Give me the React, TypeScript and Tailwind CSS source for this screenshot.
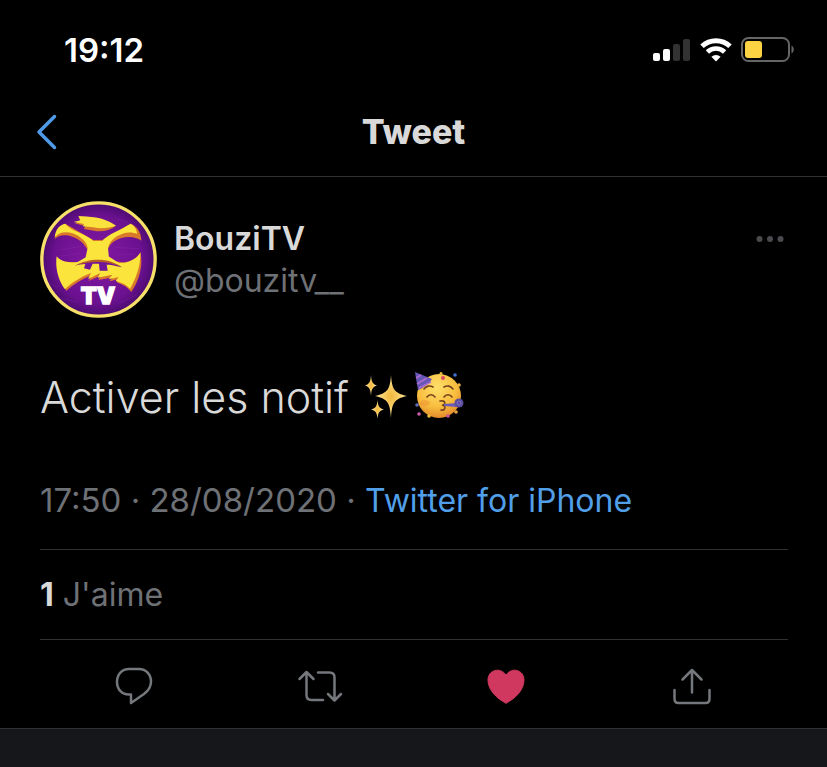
import type { ReactNode } from "react";

function SignalIcon() {
  return (
    <svg viewBox="0 0 38 24" className="h-6 w-[38px]" aria-hidden="true">
      <rect x="0" y="15" width="7" height="8" rx="2" fill="#fff" />
      <rect x="10" y="11" width="7" height="12" rx="2" fill="#fff" />
      <rect x="20" y="6" width="7" height="17" rx="2" fill="#323232" />
      <rect x="30" y="1" width="7" height="22" rx="2" fill="#323232" />
    </svg>
  );
}

function WifiIcon() {
  return (
    <svg viewBox="0 0 32 24" className="h-6 w-8" fill="none" stroke="#fff" aria-hidden="true">
      <path d="M2 8.200A20.400 20.400 0 0 1 30 8.200" strokeWidth="5" />
      <path d="M7.400 14A12.400 12.400 0 0 1 24.600 14" strokeWidth="4.600" />
      <path d="M16 23.400L11.400 18.800A6.600 6.600 0 0 1 20.600 18.800Z" fill="#fff" stroke="none" />
    </svg>
  );
}

function BatteryIcon() {
  return (
    <svg viewBox="0 0 54 26" className="h-[26px] w-[54px]" aria-hidden="true">
      <rect x="1" y="1" width="47" height="23" rx="6.500" fill="none" stroke="#656565" strokeWidth="2" />
      <rect x="4" y="4" width="17" height="17" rx="3" fill="#fbd343" />
      <path d="M50.500 8.500c3 1.500 3 6.500 0 8z" fill="#656565" />
    </svg>
  );
}

function Avatar() {
  return (
    <svg viewBox="30 33 351 351" className="size-[117px] shrink-0" role="img" aria-label="BouziTV">
      <defs>
        <radialGradient id="avatar-bg" gradientUnits="userSpaceOnUse" cx="205" cy="208" r="175">
          <stop offset="0" stopColor="#8419a3" />
          <stop offset="0.75" stopColor="#6b1190" />
          <stop offset="1" stopColor="#470a6c" />
        </radialGradient>
      </defs>
      <circle cx="205.500" cy="208.500" r="170" fill="url(#avatar-bg)" stroke="#f7e06a" strokeWidth="10" />
      {/* orange edge under the face */}
      <g fill="#d9782b">
        <path d="M134 100L154 97L148 84C179 87 221 84 258 107C240 121 214 127 192 122L162 117L165 108Z" />
        <path d="M74 148C80 140 92 134 112 136C136 141 154 152 166 170L180 185L232 185C236 165 250 152 272 145C294 138 316 140 334 152C334 126 320 108 302 101L217 150L190 150L106 101L80 122Z" />
        <path d="M331 187C340 224 329 270 304 306C294 293 280 284 260 277L268 267L238 274L249 262L205 270L213 256L176 273L185 256C156 267 130 284 108 303L80 199L200 240Z" />
      </g>
      <path d="M131 96L151 91L145 78C176 81 218 78 258 107C238 114 214 117 190 112L159 109L162 102Z" fill="#fbe13d" />
      <g fill="#fbe43c">
        <path d="M74 142C76 119 88 104 106 101C116 115 136 122 158 133C172 140 184 147 190 153H217C224 144 238 135 254 127C273 117 291 108 302 101C312 106 320 117 322 132C308 126 292 126 278 131C252 140 238 155 234 175L240 235H160L173 173C169 154 151 139 128 130C106 123 85 127 74 142Z" />
        <path d="M80 199C91 213 117 221 143 216L205 180L266 218C292 221 319 207 331 187C332 224 320 263 300 296C290 285 276 278 257 273L266 261L236 268L247 254L203 263L211 249L174 267L183 249C154 260 126 277 105 298C84 270 75 232 80 199Z" />
      </g>
      {/* eye sockets, open on the outer side */}
      <path d="M74 152C88 136 115 138 137 146C158 156 168 168 167 182C166 200 151 212 129 216C108 218 90 211 80 199L72 190Z" fill="url(#avatar-bg)" />
      <path d="M331 187L340 170L334 153C314 140 288 140 268 149C250 157 241 170 241 185C242 203 255 214 275 217C298 218 321 205 331 187Z" fill="url(#avatar-bg)" />
      {/* mouth and teeth */}
      <path d="M134 227C157 216 180 212 205 212C231 212 254 218 276 232C254 226 239 224 230 224L233 242H209L207 221H188L180 239L162 235L166 222C154 223 145 224 134 227Z" fill="#70149a" />
      <path d="M134 227C157 214 180 209 205 209C231 209 254 216 276 232C253 221 229 216 205 216C180 216 156 220 134 227Z" fill="#b85d27" />
      <g stroke="#a846c4" strokeWidth="2" opacity="0.25">
        <path d="M90 180L155 168M95 198L150 190M60 280L82 292M255 172L325 176M265 195L315 192M262 86L310 105M85 322L145 338M265 340L320 315" />
      </g>
      <text x="204" y="341" textAnchor="middle" fill="#fff" stroke="#fff" strokeWidth="4" className="text-[70px] font-black">
        TV
      </text>
    </svg>
  );
}

function Sparkles() {
  return (
    <svg viewBox="0 0 46 48" className="h-12 w-[46px]" role="img" aria-label="étincelles">
      <defs>
        <radialGradient id="sparkle">
          <stop offset="0" stopColor="#f2b73b" />
          <stop offset="1" stopColor="#ffe99c" />
        </radialGradient>
      </defs>
      <g fill="url(#sparkle)">
        <path d="M26 2C27 16 29 20 42 23C29 26 27 30 26 45C25 30 23 26 10 23C23 20 25 16 26 2Z" />
        <path d="M6 2C6.500 9 7.500 11 12 12.500C7.500 14 6.500 16 6 23C5.500 16 4.500 14 0 12.500C4.500 11 5.500 9 6 2Z" />
        <path d="M12.500 27C13 33 14 35 19 36.500C14 38 13 40 12.500 46C12 40 11 38 6 36.500C11 35 12 33 12.500 27Z" />
      </g>
    </svg>
  );
}

function PartyFace() {
  return (
    <svg viewBox="0 0 50 50" className="size-[50px]" role="img" aria-label="visage de fête">
      <defs>
        <radialGradient id="face" cx="0.45" cy="0.3" r="0.75">
          <stop offset="0" stopColor="#ffe06b" />
          <stop offset="0.6" stopColor="#f8bd3e" />
          <stop offset="1" stopColor="#df8128" />
        </radialGradient>
      </defs>
      <circle cx="24" cy="24" r="22" fill="url(#face)" />
      <path d="M0 0L17 7C14 12 8 16 3 18Z" fill="#6557b5" />
      <path d="M1 6L6 3M2 12L12 6M4 16L16 10" stroke="#b06bd0" strokeWidth="1.500" />
      <g fill="none" stroke="#75441f" strokeWidth="1.600" strokeLinecap="round">
        <path d="M9 17C11 14 15 13 18 15M29 15C32 13 36 14 38 17" />
        <path d="M12 25C14 22 18 22 20 25M29 25C31 22 35 22 37 25" />
        <path d="M25 29C31 28 31 33 27 33C32 34 30 39 26 38" />
      </g>
      <ellipse cx="10" cy="31" rx="5" ry="3" fill="#ee8730" opacity="0.4" />
      <path d="M29 32L42 31V35L29 34Z" fill="#6c5cb4" />
      <circle cx="44" cy="31" r="4.500" fill="#5b4c9e" />
      <circle cx="44" cy="31" r="2" fill="none" stroke="#8173c4" />
      <g>
        <circle cx="28" cy="6" r="2" fill="#da4864" />
        <circle cx="40" cy="3" r="1.800" fill="#4270cf" />
        <circle cx="26" cy="1.500" r="1.500" fill="#edbd42" />
        <circle cx="44" cy="13" r="1.800" fill="#edb846" />
        <circle cx="2" cy="33" r="1.800" fill="#5e6fb7" />
        <circle cx="4" cy="42" r="1.800" fill="#c85eac" />
        <circle cx="14" cy="44" r="1.800" fill="#edbb3e" />
        <circle cx="33" cy="44" r="1.800" fill="#c654a0" />
        <circle cx="41" cy="40" r="1.800" fill="#e8a644" />
      </g>
    </svg>
  );
}

function ActionIcon({ children }: { children: ReactNode }) {
  return (
    <svg viewBox="0 0 46 40" className="h-10 w-[46px]" fill="none" stroke="#74777c" strokeWidth="2.500" strokeLinecap="round" strokeLinejoin="round" aria-hidden="true">
      {children}
    </svg>
  );
}

const ACTIONS = [
  {
    label: "Répondre",
    icon: <path d="M20 28.500H18C10.500 28.500 6 23 6 16C6 8.500 11 3 18 3H28C35 3 40 8.500 40 15.500C40 21.500 37 25 33 28L20 37Z" />,
  },
  {
    label: "Retweeter",
    icon: <path d="M2.500 13L9.500 6L16.500 13M9.500 6V29Q9.500 34 14.500 34H26M21 6.500H32.500Q37.500 6.500 37.500 11.500V34M31 28L37.500 34.500L44 28" />,
  },
  {
    label: "J'aime",
    icon: <path d="M23 37C14 33 5 24 5 14C5 4 17 .500 23 9C29 .500 41 4 41 14C41 24 32 33 23 37Z" fill="#d1385f" stroke="#d1385f" strokeWidth="1" />,
  },
  {
    label: "Partager",
    icon: <path d="M13.500 13.500L23 4L32.500 13.500M23 4V26.500M5.500 24V33Q5.500 37 9.500 37H36.500Q40.500 37 40.500 33V24" />,
  },
];

export default function App() {
  return (
    <div className="flex min-h-screen flex-col bg-black font-['Inter','Liberation_Sans',sans-serif] text-[#d9d9d9]">
      <div className="flex h-[100px] items-center justify-between pr-8 pl-16">
        <time className="text-[33px] leading-10 font-semibold text-white">19:12</time>
        <div className="flex items-center gap-[9px]">
          <SignalIcon />
          <WifiIcon />
          <BatteryIcon />
        </div>
      </div>

      <header className="grid h-[77px] grid-cols-[1fr_auto_1fr] items-start border-b border-[#303133] pt-3">
        <button type="button" aria-label="Retour" className="ml-9 w-6">
          <svg viewBox="0 0 24 40" className="h-10 w-6" fill="none" stroke="#4f9ae6" strokeWidth="3.500" strokeLinecap="round" strokeLinejoin="round">
            <path d="M18.500 4.500L3 20L18.500 35.500" />
          </svg>
        </button>
        <h1 className="text-[34px] leading-10 font-extrabold">Tweet</h1>
      </header>

      <main>
        <article>
          <div className="flex items-start pt-6 pr-[42px] pl-10">
            <Avatar />
            <div className="ml-[17px] flex-1 pt-[17px] text-[32px] leading-[42px]">
              <p className="font-semibold">BouziTV</p>
              <p className="text-[#6e7176]">@bouzitv__</p>
            </div>
            <button type="button" aria-label="Plus d'options" className="pt-[34px]">
              <svg viewBox="0 0 30 8" className="h-2 w-[30px]" fill="#4a4b4e">
                <circle cx="4.500" cy="4" r="3" />
                <circle cx="15" cy="4" r="3" />
                <circle cx="25.500" cy="4" r="3" />
              </svg>
            </button>
          </div>

          <p className="mt-[49px] flex items-center px-10 text-[43px] leading-[60px] font-light">
            Activer les notif
            <span className="ml-4 flex items-center gap-1">
              <Sparkles />
              <PartyFace />
            </span>
          </p>

          <p className="mt-[53px] px-10 text-[33px] leading-10 text-[#6e7176]">
            17:50 · 28/08/2020 ·{" "}
            <a href="#" className="text-[32px] text-[#519fe9]">
              Twitter for iPhone
            </a>
          </p>

          <div className="mt-7 mr-[39px] ml-10 flex h-[91px] items-center border-y border-[#303133] text-[32px] leading-10 text-[#6e7176]">
            <p>
              <strong className="font-bold text-[#d9d9d9]">1</strong> J'aime
            </p>
          </div>

          <div className="grid h-[88px] grid-cols-4 items-center pt-1 pr-[42px] pl-[41px]">
            {ACTIONS.map((action) => (
              <button key={action.label} type="button" aria-label={action.label} className="flex justify-center">
                <ActionIcon>{action.icon}</ActionIcon>
              </button>
            ))}
          </div>
        </article>
      </main>

      <div className="flex-1 border-t border-[#303133] bg-[#15171a]" />
    </div>
  );
}
